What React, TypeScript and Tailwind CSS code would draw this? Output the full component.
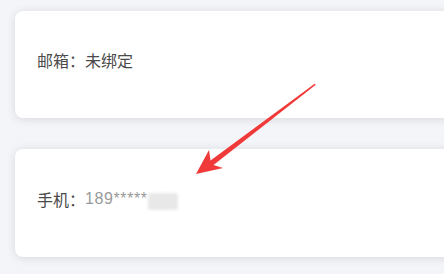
export default function App() {
  return (
    <div
      className="relative w-[444px] h-[274px] overflow-hidden bg-[#f3f5f9] pl-[15px] pt-[11px] flex flex-col gap-[31px]"
      style={{ fontFamily: '"Noto Sans CJK SC", "Liberation Sans", sans-serif' }}
    >
      {/* email card */}
      <div className="w-[460px] h-[107px] shrink-0 rounded-[8px] bg-white shadow-[0_1px_10px_rgba(0,0,0,0.12)] pl-[22px] pt-[37px]">
        <p className="text-[16px] leading-[24px] text-[#4a4a4a]">邮箱：未绑定</p>
      </div>

      {/* phone card */}
      <div className="w-[460px] h-[108px] shrink-0 rounded-[8px] bg-white shadow-[0_1px_10px_rgba(0,0,0,0.12)] pl-[22px] pt-[38px]">
        <p className="flex items-center text-[16px] leading-[24px] text-[#4a4a4a]">
          <span>手机：</span>
          <span className="text-[#9a9a9a] tracking-[0.6px]" style={{ fontFamily: '"Liberation Sans", sans-serif' }}>189*****</span>
          <span className="mt-[4px] w-[30px] h-[17px] rounded-[3px] bg-[#e8e8e8] blur-[1.5px]" />
        </p>
      </div>

      {/* annotation arrow */}
      <svg className="absolute left-0 top-0 pointer-events-none" width="444" height="274" viewBox="0 0 444 274">
        <polygon
          points="196,174 209,150 210.5,160.5 315,83.5 315.5,85 213.5,165 223,168"
          fill="#f03a3a"
        />
      </svg>
    </div>
  );
}
